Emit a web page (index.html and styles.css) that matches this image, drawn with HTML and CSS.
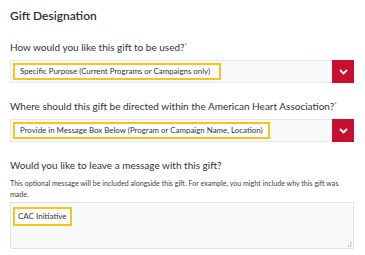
FILE: index.html
```html
<!DOCTYPE html>
<html lang="en">

<head>
    <meta charset="UTF-8">
    <meta name="viewport" content="width=device-width, initial-scale=1.0">
    <title>Gift Designation</title>
    <link rel="stylesheet" href="styles.css">
</head>

<body>
    <div class="designation">
        <h3 class="title">Gift Designation</h3>

        <div class="field">
            <label class="label">How would you like this gift to be used?<sup>*</sup></label>
            <div class="select">
                <span class="mark mark-first">Specific Purpose (Current Programs or Campaigns only)</span>
                <span class="arrow">
                    <svg width="9" height="6" viewBox="0 0 9 6"><path d="M1 1 L4.5 4.5 L8 1" fill="none" stroke="#fff" stroke-width="1.8"/></svg>
                </span>
            </div>
        </div>

        <div class="field">
            <label class="label">Where should this gift be directed within the American Heart Association?<sup>*</sup></label>
            <div class="select">
                <span class="mark">Provide in Message Box Below (Program or Campaign Name, Location)</span>
                <span class="arrow">
                    <svg width="9" height="6" viewBox="0 0 9 6"><path d="M1 1 L4.5 4.5 L8 1" fill="none" stroke="#fff" stroke-width="1.8"/></svg>
                </span>
            </div>
        </div>

        <div class="field">
            <label class="label">Would you like to leave a message with this gift?</label>
            <p class="help">This optional message will be included alongside this gift. For example, you might include why this gift was made.</p>
            <div class="message">
                <span class="mark mark-msg">CAC Initiative</span>
                <span class="grip"></span>
            </div>
        </div>
    </div>
</body>

</html>
```

FILE: styles.css
```css
body {
    margin: 0;
    background: #fff;
    font-family: Lato, "Noto Sans", sans-serif;
    color: #333;
}

.designation {
    padding: 8px 11px 0 10px;
}

.title {
    margin: 0 0 17px;
    font-size: 12px;
    font-weight: 600;
    line-height: 16px;
    color: #2f2f2f;
}

.field {
    margin-bottom: 17px;
}

.field:last-child {
    margin-bottom: 0;
}

.label {
    display: block;
    font-size: 10px;
    line-height: 13px;
    margin-bottom: 6px;
    color: #333;
}

.label sup {
    font-size: 6px;
    line-height: 0;
}

.select {
    display: flex;
    align-items: center;
    justify-content: space-between;
    height: 23px;
    background: #f8f9fb;
    border: 1px solid #e6e8ec;
    box-sizing: border-box;
}

.mark {
    display: inline-block;
    margin-left: 2px;
    padding: 1px 5px;
    border: 2px solid #f5c518;
    background: #fff;
    font-size: 7.9px;
    line-height: 11px;
    color: #333;
}

.mark-first {
    padding-right: 9px;
}

.arrow {
    display: flex;
    align-items: center;
    justify-content: center;
    width: 22px;
    height: 23px;
    margin-right: -1px;
    background: #c8102e;
}

.help {
    margin: 4px 0 2px;
    font-size: 7.1px;
    line-height: 11px;
    color: #444;
}

.message {
    position: relative;
    height: 47px;
    background: #f8f9fb;
    border: 1px solid #e0e2e6;
    box-sizing: border-box;
}

.mark-msg {
    margin: 0 0 0 2px;
    font-size: 8px;
    line-height: 13px;
    padding: 1px 3px;
}

.grip {
    position: absolute;
    right: 1px;
    bottom: 1px;
    width: 5px;
    height: 5px;
    background: linear-gradient(135deg, transparent 50%, #bbb 50%, #bbb 60%, transparent 60%, transparent 75%, #bbb 75%, #bbb 85%, transparent 85%);
}
```
